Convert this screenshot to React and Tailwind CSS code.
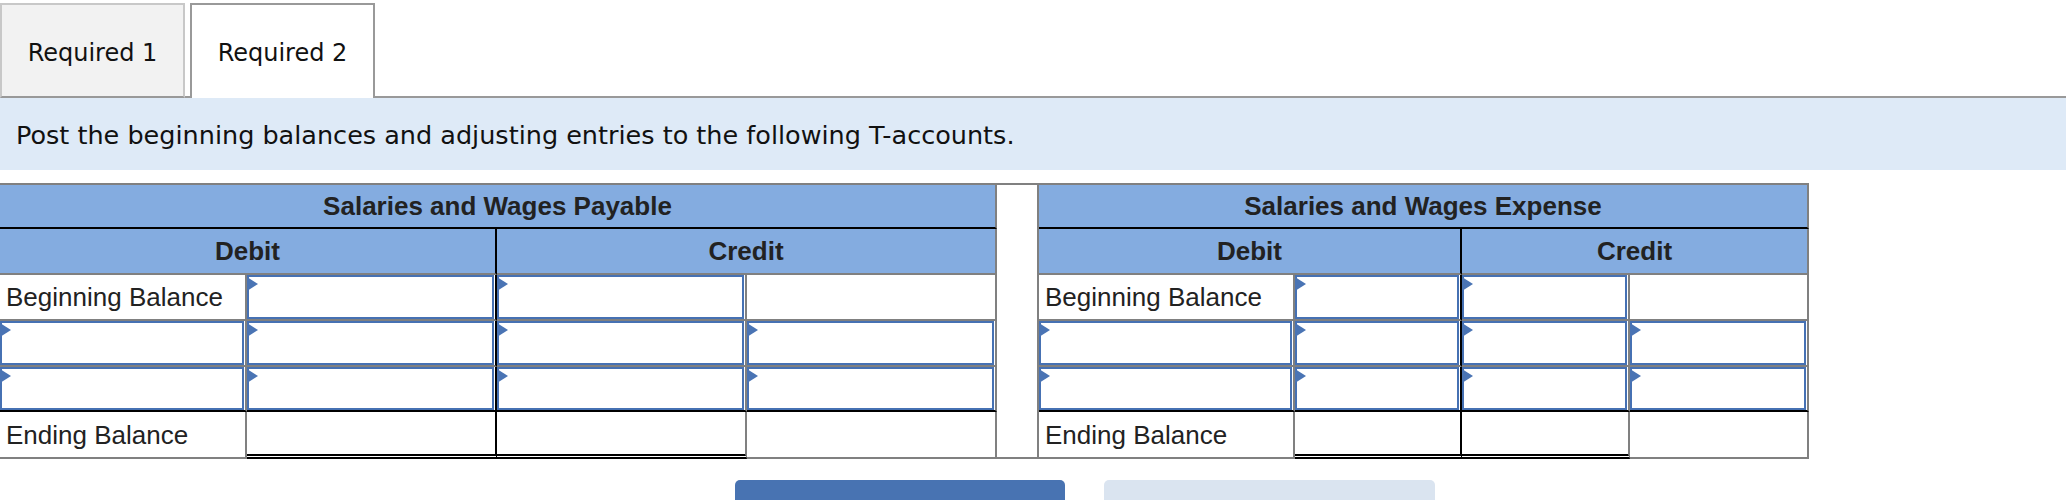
import React from "react";

const BLUE = "bg-[#84ace0]";

function Tri() {
  return (
    <svg className="absolute left-[-2px] top-[0px]" width="11" height="14" viewBox="0 0 11 14">
      <polygon points="0,0 11,7 0,14" fill="#4a74b4" />
    </svg>
  );
}

function InputCell({ cls }) {
  return (
    <div className={"box-border pr-px bg-white " + cls}>
      <div className="relative box-border h-full w-full border-2 border-[#4671b3] bg-white">
        <Tri />
      </div>
    </div>
  );
}

function Label({ text, cls }) {
  return (
    <div className={"box-border flex items-center bg-white pl-[6px] text-[26px] leading-none text-[#222] " + cls}>
      {text}
    </div>
  );
}

function Empty({ cls }) {
  return <div className={"box-border bg-white " + cls}></div>;
}

function TAccount({ title, first }) {
  return (
    <>
      <div className={"col-span-4 box-border flex items-center justify-center border-t-2 border-t-[#808080] border-b-2 border-b-black border-r-2 border-r-[#808080] font-bold text-[26px] leading-none text-[#222] " + BLUE}>
        {title}
      </div>
      {first && (
        <div className="row-span-6 box-border border-t-2 border-t-[#808080] border-b-2 border-b-[#808080] border-r-2 border-r-[#808080] bg-white"></div>
      )}
    </>
  );
}

function SubHead() {
  return (
    <>
      <div className={"col-span-2 box-border flex items-center justify-center border-b-2 border-b-[#808080] border-r-2 border-r-black font-bold text-[26px] leading-none text-[#222] " + BLUE}>
        Debit
      </div>
      <div className={"col-span-2 box-border flex items-center justify-center border-b-2 border-b-[#808080] border-r-2 border-r-[#808080] font-bold text-[26px] leading-none text-[#222] " + BLUE}>
        Credit
      </div>
    </>
  );
}

function RowBegin() {
  return (
    <>
      <Label text="Beginning Balance" cls="border-b-2 border-b-[#808080] border-r-2 border-r-[#808080]" />
      <InputCell cls="border-b-2 border-b-[#808080] border-r-2 border-r-black" />
      <InputCell cls="border-b-2 border-b-[#808080] border-r-2 border-r-[#808080]" />
      <Empty cls="border-b-2 border-b-[#808080] border-r-2 border-r-[#808080]" />
    </>
  );
}

function RowInputs({ last }) {
  const b = last ? "border-b-2 border-b-black" : "border-b-2 border-b-[#808080]";
  return (
    <>
      <InputCell cls={b + " border-r-2 border-r-[#808080]"} />
      <InputCell cls={b + " border-r-2 border-r-black"} />
      <InputCell cls={b + " border-r-2 border-r-[#808080]"} />
      <InputCell cls={b + " border-r-2 border-r-[#808080]"} />
    </>
  );
}

function RowEnd() {
  return (
    <>
      <Label text="Ending Balance" cls="border-b-2 border-b-[#808080] border-r-2 border-r-[#808080]" />
      <Empty cls="border-b-[5px] border-double border-b-black border-r-2 border-r-black" />
      <Empty cls="border-b-[5px] border-double border-b-black border-r-2 border-r-[#808080]" />
      <Empty cls="border-b-2 border-b-[#808080] border-r-2 border-r-[#808080]" />
    </>
  );
}

export default function App() {
  return (
    <div className="w-[2066px] bg-white">
      {/* Tabs */}
      <div className="flex h-[98px] items-end" style={{ fontFamily: '"DejaVu Sans", Verdana, sans-serif' }}>
        <div className="box-border flex h-[95px] w-[185px] items-center justify-center border-x-2 border-t-2 border-x-[#c8c8c8] border-t-[#c8c8c8] border-b-2 border-b-[#999999] bg-[#f2f2f2] pt-[4px] text-[24px] text-[#111]">
          Required 1
        </div>
        <div className="box-border h-[95px] w-[5px] border-b-2 border-b-[#999999]"></div>
        <div className="box-border flex h-[95px] w-[185px] items-center justify-center border-x-2 border-t-2 border-[#999999] bg-white pt-[2px] text-[24px] text-[#111]">
          Required 2
        </div>
        <div className="box-border h-[95px] flex-1 border-b-2 border-b-[#999999]"></div>
      </div>

      {/* Instruction band */}
      <div
        className="flex h-[72px] items-center bg-[#deeaf7] pl-[16px] pt-[2px] text-[25.5px] text-[#111]"
        style={{ fontFamily: '"DejaVu Sans", Verdana, sans-serif' }}
      >
        Post the beginning balances and adjusting entries to the following T-accounts.
      </div>

      {/* T-accounts */}
      <div
        className="mt-[13px] grid w-[1809px] grid-cols-[247px_250px_250px_250px_42px_256px_167px_168px_179px] grid-rows-[46px_46px_46px_46px_45px_47px]"
        style={{ fontFamily: '"Liberation Sans", Arial, Helvetica, sans-serif' }}
      >
        <TAccount title="Salaries and Wages Payable" first />
        <TAccount title="Salaries and Wages Expense" />
        <SubHead />
        <SubHead />
        <RowBegin />
        <RowBegin />
        <RowInputs />
        <RowInputs />
        <RowInputs last />
        <RowInputs last />
        <RowEnd />
        <RowEnd />
      </div>

      {/* Buttons */}
      <div className="mt-[21px] flex gap-[39px] pl-[735px]">
        <div className="h-[40px] w-[330px] rounded-t-[5px] bg-[#4873b2]"></div>
        <div className="h-[40px] w-[331px] rounded-t-[5px] bg-[#dae4f0]"></div>
      </div>
    </div>
  );
}
